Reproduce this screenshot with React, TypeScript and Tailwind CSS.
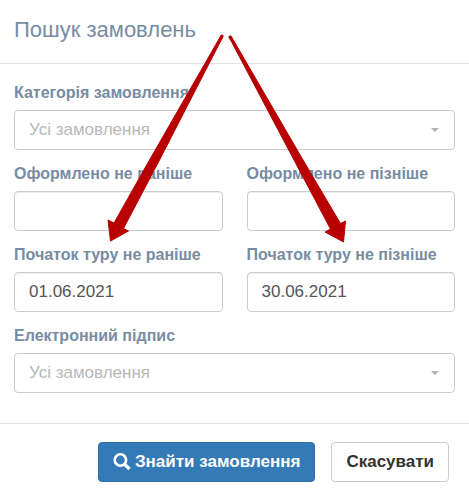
import React, { useState } from 'react';

const labelClass = 'block pb-[5px] text-base leading-6 font-bold text-[#778ca2]';
const fieldClass = 'block h-10 w-full rounded border border-[#cccccc] bg-white px-3.5 text-[17px]';

interface SelectFieldProps {
    id: string;
    label: string;
}

function SelectField({ id, label }: SelectFieldProps) {
    return (
        <div className="col-span-2">
            <label htmlFor={id} className={labelClass}>{label}</label>
            <div className="relative">
                <select id={id} className={`${fieldClass} appearance-none text-[#b8b8b8]`}>
                    <option>Усі замовлення</option>
                </select>
                <svg className="pointer-events-none absolute top-[18px] right-4 h-1 w-2" viewBox="0 0 8 4" aria-hidden="true">
                    <path d="M0 0h8L4 4z" fill="#b3b3b3" />
                </svg>
            </div>
        </div>
    );
}

interface DateFieldProps {
    id: string;
    label: string;
    initial?: string;
}

function DateField({ id, label, initial = '' }: DateFieldProps) {
    const [value, setValue] = useState(initial);

    return (
        <div>
            <label htmlFor={id} className={labelClass}>{label}</label>
            <input
                id={id}
                type="text"
                value={value}
                onChange={(e) => setValue(e.target.value)}
                className={`${fieldClass} text-[#555555] shadow-[inset_0_1px_1px_rgba(0,0,0,0.075)]`}
            />
        </div>
    );
}

function SearchIcon() {
    return (
        <svg width="18" height="18" viewBox="0 0 18 18" fill="none" stroke="currentColor" aria-hidden="true">
            <circle cx="7.4" cy="7" r="5.7" strokeWidth="2.6" />
            <path d="M11.5 11.3l5 4.7" strokeWidth="3.4" />
        </svg>
    );
}

// Two arrows pointing at the tour start dates
function Arrows() {
    return (
        <svg className="pointer-events-none absolute top-0 left-0" width="469" height="250" viewBox="0 0 469 250" fill="#b80000" stroke="#b80000" strokeWidth="1" strokeLinejoin="round" aria-hidden="true">
            <path d="M221 35.5 L223 36.5 L159.5 160 L123.5 228.5 L128.5 231 L110.5 241 L108 220 L114 223 L149.5 160 Z" />
            <path d="M229 37 L231 36 L303 160 L340.5 223.5 L345.5 221 L343.5 242 L325 232 L330.5 229 L294 160 Z" />
            <path d="M222 36 L220.5 39 M230 37 L231.5 39.5" strokeWidth="3" strokeLinecap="round" />
        </svg>
    );
}

export default function App() {
    return (
        <div className="relative bg-white font-['Liberation_Sans',Arial,sans-serif]">
            <header className="border-b border-[#e3e3e3] px-3.5 pt-[15px] pb-[18px]">
                <h1 className="text-[22px] leading-[30px] text-[#778ca2]">Пошук замовлень</h1>
            </header>

            <form onSubmit={(e) => e.preventDefault()}>
                <div className="grid grid-cols-2 gap-x-6 gap-y-3 px-3.5 pt-[17px] pb-[30px]">
                    <SelectField id="category" label="Категорія замовлення" />
                    <DateField id="created-from" label="Оформлено не раніше" />
                    <DateField id="created-to" label="Оформлено не пізніше" />
                    <DateField id="start-from" label="Початок туру не раніше" initial="01.06.2021" />
                    <DateField id="start-to" label="Початок туру не пізніше" initial="30.06.2021" />
                    <SelectField id="signature" label="Електронний підпис" />
                </div>

                <footer className="flex justify-end gap-4 border-t border-[#e3e3e3] px-5 pt-[18px] pb-5">
                    <button type="submit" className="flex h-10 items-center gap-1 rounded border border-[#2e6da4] bg-[#337ab7] px-3.5 text-[17px] font-bold text-white">
                        <SearchIcon />
                        Знайти замовлення
                    </button>
                    <button type="button" className="h-10 rounded border border-[#cccccc] bg-white px-3.5 text-[17px] font-bold text-[#333333]">
                        Скасувати
                    </button>
                </footer>
            </form>

            <Arrows />
        </div>
    );
}
